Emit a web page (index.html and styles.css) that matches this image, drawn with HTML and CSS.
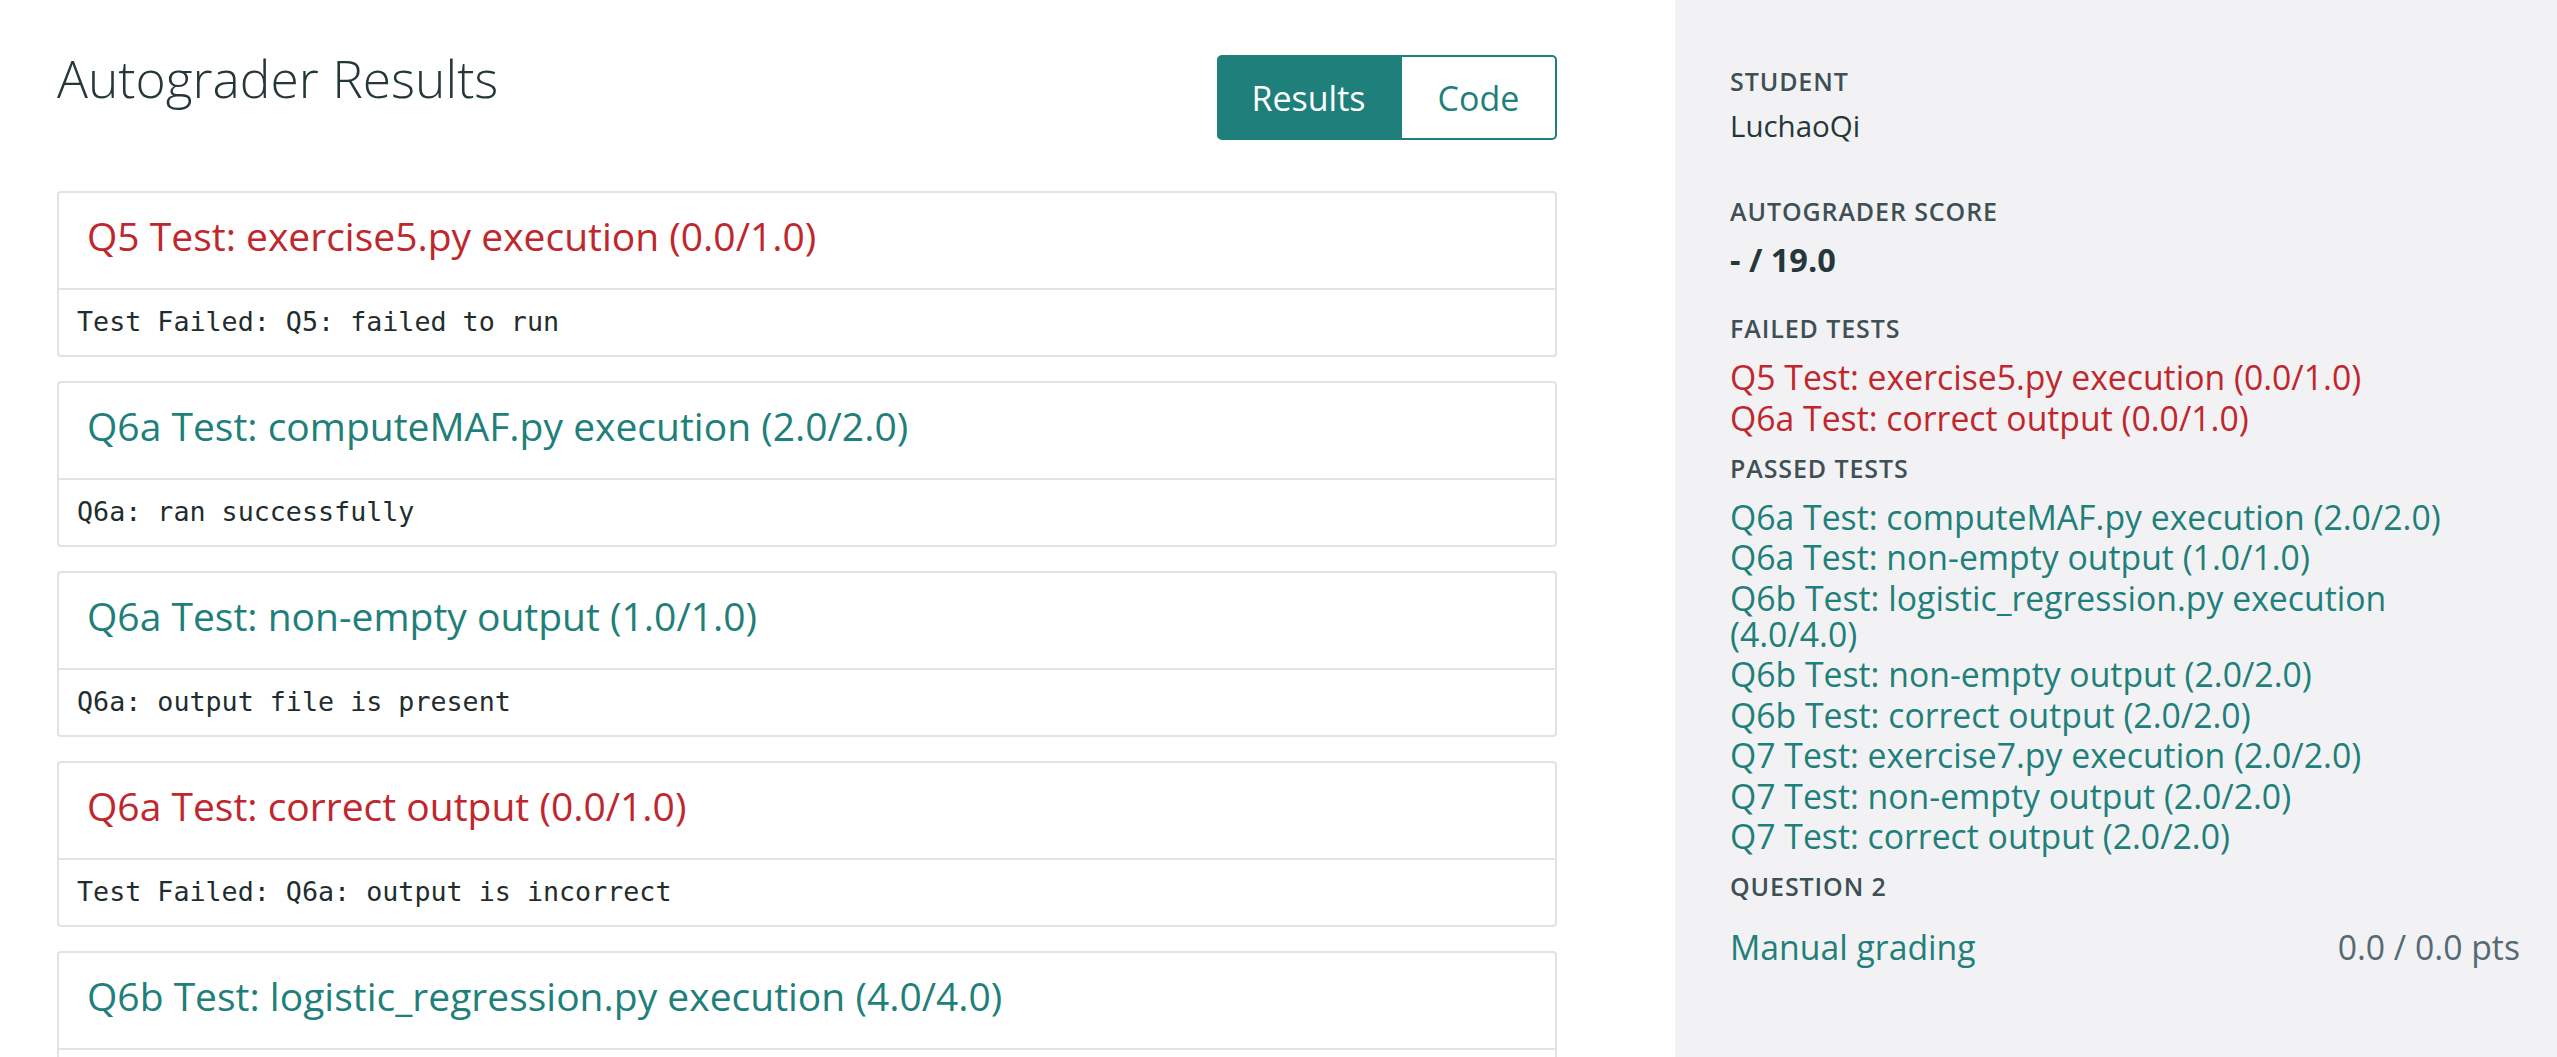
FILE: index.html
```html
<!DOCTYPE html>
<html lang="en">
<head>
<meta charset="utf-8">
<title>Autograder Results</title>
<link rel="stylesheet" href="styles.css">
</head>
<body>
<div class="layout">
  <main class="main">
    <header class="page-header">
      <h1 class="page-title">Autograder Results</h1>
      <div class="toggle">
        <button class="toggle-btn toggle-btn--active">Results</button>
        <button class="toggle-btn">Code</button>
      </div>
    </header>
    <section class="tests">
      <article class="test-card">
        <div class="test-card__head"><h2 class="test-title test-title--failed">Q5 Test: exercise5.py execution (0.0/1.0)</h2></div>
        <div class="test-card__body"><pre class="test-output">Test Failed: Q5: failed to run</pre></div>
      </article>
      <article class="test-card">
        <div class="test-card__head"><h2 class="test-title test-title--passed">Q6a Test: computeMAF.py execution (2.0/2.0)</h2></div>
        <div class="test-card__body"><pre class="test-output">Q6a: ran successfully</pre></div>
      </article>
      <article class="test-card">
        <div class="test-card__head"><h2 class="test-title test-title--passed">Q6a Test: non-empty output (1.0/1.0)</h2></div>
        <div class="test-card__body"><pre class="test-output">Q6a: output file is present</pre></div>
      </article>
      <article class="test-card">
        <div class="test-card__head"><h2 class="test-title test-title--failed">Q6a Test: correct output (0.0/1.0)</h2></div>
        <div class="test-card__body"><pre class="test-output">Test Failed: Q6a: output is incorrect</pre></div>
      </article>
      <article class="test-card">
        <div class="test-card__head"><h2 class="test-title test-title--passed">Q6b Test: logistic_regression.py execution (4.0/4.0)</h2></div>
        <div class="test-card__body"><pre class="test-output">Q6b: ran successfully</pre></div>
      </article>
    </section>
  </main>
  <aside class="sidebar">
    <div class="side-label side-label--first">Student</div>
    <div class="student-name">LuchaoQi</div>
    <div class="side-label side-label--score">Autograder Score</div>
    <div class="score">- / 19.0</div>
    <div class="side-label side-label--failed">Failed Tests</div>
    <ul class="test-list">
      <li class="test-list__item test-list__item--failed">Q5 Test: exercise5.py execution (0.0/1.0)</li>
      <li class="test-list__item test-list__item--failed">Q6a Test: correct output (0.0/1.0)</li>
    </ul>
    <div class="side-label side-label--passed">Passed Tests</div>
    <ul class="test-list">
      <li class="test-list__item">Q6a Test: computeMAF.py execution (2.0/2.0)</li>
      <li class="test-list__item">Q6a Test: non-empty output (1.0/1.0)</li>
      <li class="test-list__item">Q6b Test: logistic_regression.py execution (4.0/4.0)</li>
      <li class="test-list__item">Q6b Test: non-empty output (2.0/2.0)</li>
      <li class="test-list__item">Q6b Test: correct output (2.0/2.0)</li>
      <li class="test-list__item">Q7 Test: exercise7.py execution (2.0/2.0)</li>
      <li class="test-list__item">Q7 Test: non-empty output (2.0/2.0)</li>
      <li class="test-list__item">Q7 Test: correct output (2.0/2.0)</li>
    </ul>
    <div class="side-label side-label--question">Question 2</div>
    <div class="grade-row">
      <span class="grade-row__name">Manual grading</span>
      <span class="grade-row__pts">0.0 / 0.0 pts</span>
    </div>
  </aside>
</div>
</body>
</html>
```

FILE: styles.css
```css
* { box-sizing: border-box; }

html, body {
  margin: 0;
  padding: 0;
  height: 100%;
}

body {
  font-family: "Open Sans", Lato, sans-serif;
  color: #253739;
  background: #ffffff;
  overflow: hidden;
}

.layout {
  display: flex;
  height: 100vh;
}

.main {
  width: 1675px;
  flex: none;
  padding: 55px 118px 0 57px;
  overflow: hidden;
}

.page-header {
  display: flex;
  justify-content: space-between;
  align-items: flex-start;
  height: 85px;
  margin-bottom: 51px;
}

.page-title {
  margin: -5px 0 0 0;
  font-weight: 300;
  font-size: 51.5px;
  line-height: 56px;
  color: #253739;
}

.toggle {
  display: flex;
  height: 85px;
}

.toggle-btn {
  font-family: "Open Sans", Lato, sans-serif;
  font-size: 34px;
  line-height: 1;
  border: 2px solid #1f7f7a;
  border-left: none;
  background: #ffffff;
  color: #1f7f7a;
  padding: 0;
  width: 155px;
  border-radius: 0 5px 5px 0;
}

.toggle-btn--active {
  width: 185px;
  background: #1f7f7a;
  color: #ffffff;
  border-radius: 5px 0 0 5px;
}

.tests {
  display: flex;
  flex-direction: column;
  gap: 24px;
}

.test-card {
  border: 2px solid #dfe2e7;
  border-radius: 4px;
  background: #ffffff;
  flex: none;
}

.test-card__head {
  height: 97px;
  display: flex;
  align-items: center;
  padding: 0 28px 8px 28px;
  border-bottom: 2px solid #dfe2e7;
}

.test-title {
  margin: 0;
  font-weight: 400;
  font-size: 39px;
  line-height: 1.2;
}

.test-title--failed { color: #c0272d; }
.test-title--passed { color: #1f7f7a; }

.test-card__body {
  height: 65px;
  display: flex;
  align-items: center;
  padding: 0 18px;
}

.test-output {
  margin: 0;
  font-family: "DejaVu Sans Mono", "Liberation Mono", monospace;
  font-size: 26.7px;
  line-height: 1.2;
  color: #1f2d2f;
}

.sidebar {
  flex: 1;
  background: #f2f2f4;
  padding: 67px 37px 0 55px;
}

.side-label {
  font-size: 25px;
  line-height: 28px;
  font-weight: 600;
  letter-spacing: 0.9px;
  text-transform: uppercase;
  color: #3e5056;
}

.student-name {
  margin-top: 14px;
  font-size: 29.5px;
  line-height: 34px;
  color: #253739;
}

.side-label--score { margin-top: 54px; }

.score {
  margin-top: 16px;
  font-size: 32.5px;
  line-height: 38px;
  font-weight: 700;
  color: #253739;
}

.side-label--failed { margin-top: 35px; }

.test-list {
  list-style: none;
  margin: 17px 0 0 0;
  padding: 0 20px 0 0;
}

.test-list__item {
  font-size: 33.75px;
  line-height: 36px;
  margin-bottom: 4.5px;
  color: #1f7f7a;
}

.test-list__item--failed { color: #c0272d; }

.side-label--passed { margin-top: 18px; }

.side-label--question { margin-top: 18px; }

.grade-row {
  display: flex;
  justify-content: space-between;
  margin-top: 29px;
  font-size: 33.75px;
  line-height: 36px;
}

.grade-row__name { color: #1f7f7a; }
.grade-row__pts { color: #566a73; }
```
